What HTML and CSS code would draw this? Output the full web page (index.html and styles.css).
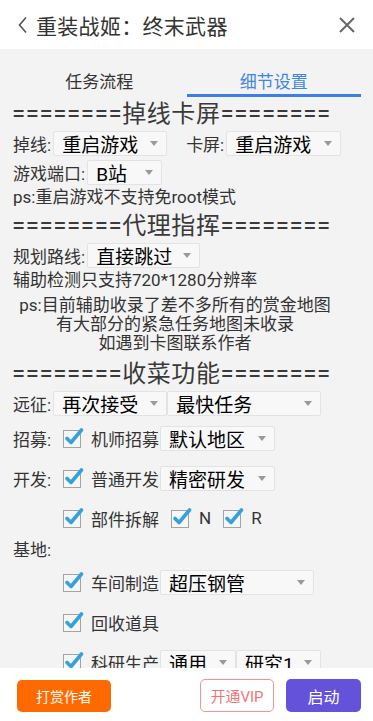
FILE: index.html
```html
<!DOCTYPE html>
<html lang="zh-CN">
<head>
<meta charset="utf-8">
<title>重装战姬：终末武器</title>
<link rel="stylesheet" href="styles.css">
</head>
<body>
<div class="app">
  <header class="topbar">
    <svg class="back" width="12" height="18" viewBox="0 0 12 18"><path d="M9 1.5 L2.5 9 L9 16.5" fill="none" stroke="#555" stroke-width="1.6"/></svg>
    <div class="title">重装战姬：终末武器</div>
    <svg class="close" width="18" height="18" viewBox="0 0 18 18"><path d="M2 2 L16 16 M16 2 L2 16" fill="none" stroke="#666" stroke-width="2"/></svg>
  </header>

  <main class="content">
    <div class="tabs">
      <div class="tab">任务流程</div>
      <div class="tab active">细节设置</div>
    </div>

    <div class="panel">
      <div class="sect">========掉线卡屏========</div>
      <div class="row">
        <span class="lbl">掉线:</span>
        <div class="sel w114"><span>重启游戏</span><i class="arr"></i></div>
        <span class="lbl gap20">卡屏:</span>
        <div class="sel w115"><span>重启游戏</span><i class="arr"></i></div>
      </div>
      <div class="row">
        <span class="lbl">游戏端口:</span>
        <div class="sel w75"><span>B站</span><i class="arr"></i></div>
      </div>
      <div class="line">ps:重启游戏不支持免root模式</div>

      <div class="sect s2">========代理指挥========</div>
      <div class="row">
        <span class="lbl">规划路线:</span>
        <div class="sel w113"><span>直接跳过</span><i class="arr"></i></div>
      </div>
      <div class="line">辅助检测只支持720*1280分辨率</div>
      <div class="note">
        <div>ps:目前辅助收录了差不多所有的赏金地图</div>
        <div>有大部分的紧急任务地图未收录</div>
        <div>如遇到卡图联系作者</div>
      </div>

      <div class="sect s3">========收菜功能========</div>
      <div class="row">
        <span class="lbl">远征:</span>
        <div class="sel w114"><span>再次接受</span><i class="arr"></i></div>
        <div class="sel w154"><span>最快任务</span><i class="arr"></i></div>
      </div>
      <div class="crow">
        <span class="lcol">招募:</span>
        <svg class="cb" width="22" height="22" viewBox="0 0 22 22"><rect x="1.5" y="4.5" width="17" height="17" fill="#f7f7f7" stroke="#a3a3a3"/><path d="M5 12.5 L9 16.5 L19.5 4" fill="none" stroke="#36a2dd" stroke-width="3.6" stroke-linecap="round" stroke-linejoin="round"/></svg>
        <span class="ct">机师招募</span>
        <div class="sel w115"><span>默认地区</span><i class="arr"></i></div>
      </div>
      <div class="crow">
        <span class="lcol">开发:</span>
        <svg class="cb" width="22" height="22" viewBox="0 0 22 22"><rect x="1.5" y="4.5" width="17" height="17" fill="#f7f7f7" stroke="#a3a3a3"/><path d="M5 12.5 L9 16.5 L19.5 4" fill="none" stroke="#36a2dd" stroke-width="3.6" stroke-linecap="round" stroke-linejoin="round"/></svg>
        <span class="ct">普通开发</span>
        <div class="sel w115"><span>精密研发</span><i class="arr"></i></div>
      </div>
      <div class="crow">
        <span class="lcol"></span>
        <svg class="cb" width="22" height="22" viewBox="0 0 22 22"><rect x="1.5" y="4.5" width="17" height="17" fill="#f7f7f7" stroke="#a3a3a3"/><path d="M5 12.5 L9 16.5 L19.5 4" fill="none" stroke="#36a2dd" stroke-width="3.6" stroke-linecap="round" stroke-linejoin="round"/></svg>
        <span class="ct">部件拆解</span>
        <svg class="cb cb2" width="22" height="22" viewBox="0 0 22 22"><rect x="1.5" y="4.5" width="17" height="17" fill="#f7f7f7" stroke="#a3a3a3"/><path d="M5 12.5 L9 16.5 L19.5 4" fill="none" stroke="#36a2dd" stroke-width="3.6" stroke-linecap="round" stroke-linejoin="round"/></svg>
        <span class="ct">N</span>
        <svg class="cb cb2" width="22" height="22" viewBox="0 0 22 22"><rect x="1.5" y="4.5" width="17" height="17" fill="#f7f7f7" stroke="#a3a3a3"/><path d="M5 12.5 L9 16.5 L19.5 4" fill="none" stroke="#36a2dd" stroke-width="3.6" stroke-linecap="round" stroke-linejoin="round"/></svg>
        <span class="ct">R</span>
      </div>
      <div class="base">基地:</div>
      <div class="crow">
        <span class="lcol"></span>
        <svg class="cb" width="22" height="22" viewBox="0 0 22 22"><rect x="1.5" y="4.5" width="17" height="17" fill="#f7f7f7" stroke="#a3a3a3"/><path d="M5 12.5 L9 16.5 L19.5 4" fill="none" stroke="#36a2dd" stroke-width="3.6" stroke-linecap="round" stroke-linejoin="round"/></svg>
        <span class="ct">车间制造</span>
        <div class="sel w154"><span>超压钢管</span><i class="arr"></i></div>
      </div>
      <div class="crow">
        <span class="lcol"></span>
        <svg class="cb" width="22" height="22" viewBox="0 0 22 22"><rect x="1.5" y="4.5" width="17" height="17" fill="#f7f7f7" stroke="#a3a3a3"/><path d="M5 12.5 L9 16.5 L19.5 4" fill="none" stroke="#36a2dd" stroke-width="3.6" stroke-linecap="round" stroke-linejoin="round"/></svg>
        <span class="ct">回收道具</span>
      </div>
      <div class="crow">
        <span class="lcol"></span>
        <svg class="cb" width="22" height="22" viewBox="0 0 22 22"><rect x="1.5" y="4.5" width="17" height="17" fill="#f7f7f7" stroke="#a3a3a3"/><path d="M5 12.5 L9 16.5 L19.5 4" fill="none" stroke="#36a2dd" stroke-width="3.6" stroke-linecap="round" stroke-linejoin="round"/></svg>
        <span class="ct">科研生产</span>
        <div class="sel w76"><span>通用</span><i class="arr"></i></div>
        <div class="sel w85"><span>研究1</span><i class="arr"></i></div>
      </div>
    </div>
  </main>

  <footer class="bottombar">
    <button class="btn reward">打赏作者</button>
    <div class="spacer"></div>
    <button class="btn vip">开通VIP</button>
    <button class="btn start">启动</button>
  </footer>
</div>
</body>
</html>
```

FILE: styles.css
```css
* { box-sizing: border-box; }
html, body { margin: 0; padding: 0; }
body {
  width: 373px;
  height: 721px;
  overflow: hidden;
  font-family: Roboto, "Noto Sans CJK SC", sans-serif;
  color: #333;
  background: #fff;
}
.app {
  display: flex;
  flex-direction: column;
  height: 721px;
}
.topbar {
  height: 49px;
  flex: none;
  display: flex;
  align-items: center;
  padding: 0 17px 0 17px;
  background: #fff;
}
.back { margin-right: 7px; margin-top: 1px; }
.title {
  flex: 1;
  font-size: 21px;
  color: #333;
  letter-spacing: 0.3px;
}
.close { margin-top: 1px; }

.content {
  flex: 1;
  background: #f3f3f3;
  overflow: hidden;
}
.tabs {
  display: flex;
  margin: 0 12px;
  height: 48px;
}
.tab {
  flex: 1;
  text-align: center;
  font-size: 17px;
  line-height: 24px;
  padding-top: 21px;
  color: #333;
}
.tab.active {
  color: #3f86e4;
  border-bottom: 3px solid #3c7fe6;
}

.panel {
  width: 338px;
  padding-left: 12px;
  padding-top: 3px;
}
.sect {
  font-size: 24px;
  line-height: 29px;
  height: 29px;
  color: #3a3a3a;
  white-space: nowrap;
  letter-spacing: 0.6px;
}
.s2 { margin-top: 4px; }
.s3 { margin-top: 7px; }

.row {
  display: flex;
  align-items: center;
  height: 29px;
}
.lbl {
  flex: none;
  white-space: nowrap;
  font-size: 17px;
  color: #333;
  margin-left: 1px;
  margin-right: 2px;
}
.gap20 { margin-left: 19px; }
.sel {
  flex: none;
  display: flex;
  align-items: center;
  height: 25px;
  background: #f8f8f8;
  border: 1px solid #e3e3e3;
  border-radius: 2px;
  padding-left: 8px;
  padding-right: 8px;
  font-size: 19px;
  font-weight: 400;
  color: #000;
}
.sel span { flex: 1; white-space: nowrap; }
.arr {
  width: 0;
  height: 0;
  border-left: 4.5px solid transparent;
  border-right: 4.5px solid transparent;
  border-top: 5px solid #9a9a9a;
}
.w75 { width: 75px; }
.w76 { width: 76px; }
.w85 { width: 85px; }
.w113 { width: 113px; }
.w114 { width: 114px; }
.w115 { width: 115px; }
.w154 { width: 154px; }

.line {
  font-size: 17px;
  line-height: 21px;
  color: #333;
  margin-left: 1px;
  white-space: nowrap;
}
.note {
  text-align: center;
  font-size: 17px;
  line-height: 19px;
  color: #333;
  margin-top: 5px;
  width: 326px;
  white-space: nowrap;
}

.crow {
  display: flex;
  align-items: center;
  height: 40px;
}
.lcol {
  width: 49px;
  flex: none;
  font-size: 17px;
  color: #333;
  margin-left: 1px;
  white-space: nowrap;
}
.cb { flex: none; margin-top: -3px; }
.cb2 { margin-left: 10px; }
.ct {
  flex: none;
  white-space: nowrap;
  font-size: 17px;
  color: #333;
  margin-left: 7px;
  margin-right: 1px;
}
.base {
  height: 24px;
  line-height: 24px;
  font-size: 17px;
  color: #333;
  margin-left: 1px;
}

.bottombar {
  height: 53px;
  flex: none;
  background: #fff;
  display: flex;
  align-items: flex-start;
  padding: 11px 12px 0 17px;
}
.spacer { flex: 1; }
.btn {
  font-family: Roboto, "Noto Sans CJK SC", sans-serif;
  height: 33px;
  border-radius: 5px;
  border: none;
  padding: 0;
  font-size: 15px;
}
.reward {
  width: 94px;
  background: #ff6a00;
  color: #fff;
  font-size: 14px;
  margin-top: 1px;
  height: 32px;
}
.vip {
  width: 74px;
  background: #fff;
  border: 1px solid #f09494;
  color: #ec7676;
  margin-right: 12px;
}
.start {
  width: 75px;
  background: #6452da;
  color: #fff;
  font-size: 16px;
}
```
